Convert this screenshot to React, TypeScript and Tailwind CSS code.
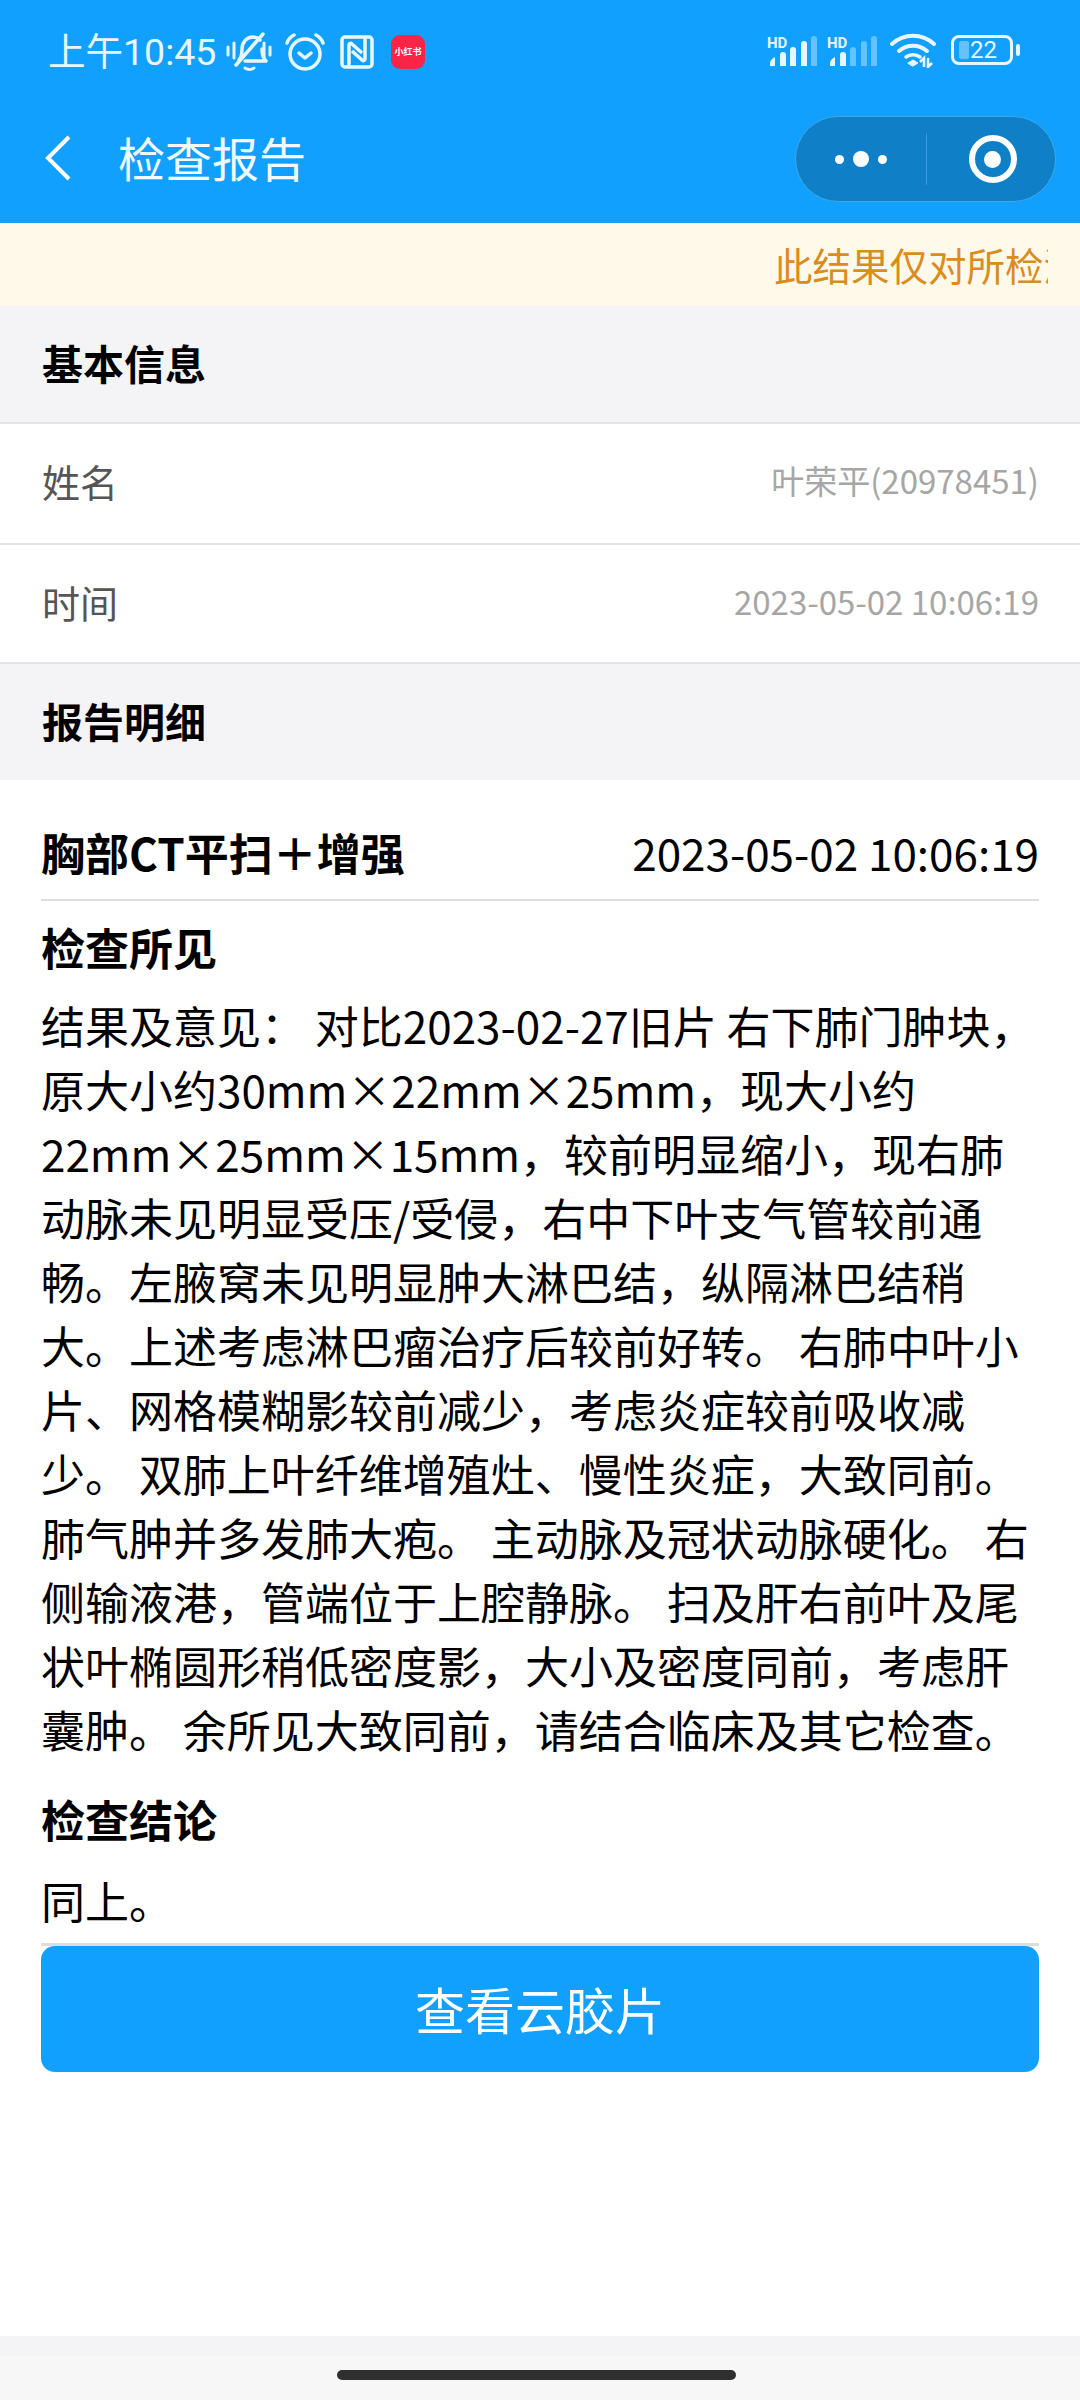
const reportLines = [
  '结果及意见： 对比2023-02-27旧片 右下肺门肿块，',
  '原大小约30mm×22mm×25mm，现大小约',
  '22mm×25mm×15mm，较前明显缩小，现右肺',
  '动脉未见明显受压/受侵，右中下叶支气管较前通',
  '畅。左腋窝未见明显肿大淋巴结，纵隔淋巴结稍',
  '大。上述考虑淋巴瘤治疗后较前好转。 右肺中叶小',
  '片、网格模糊影较前减少，考虑炎症较前吸收减',
  '少。 双肺上叶纤维增殖灶、慢性炎症，大致同前。',
  '肺气肿并多发肺大疱。 主动脉及冠状动脉硬化。 右',
  '侧输液港，管端位于上腔静脉。 扫及肝右前叶及尾',
  '状叶椭圆形稍低密度影，大小及密度同前，考虑肝',
  '囊肿。 余所见大致同前，请结合临床及其它检查。',
];

function MuteBell() {
  return (
    <svg width="46" height="40" viewBox="0 0 46 40" fill="none" stroke="#e8f7ff" strokeWidth="3.5" strokeLinecap="round" strokeLinejoin="round">
      <path d="M2 15v8M8 11v15M38 11v15M44 15v8" strokeWidth="3" />
      <path d="M13 28c3-3 3-7 3-11 0-7 5-12 11-12 3 0 5 1 7 3" />
      <path d="M36 17c0 5 1 9 4 12H19" />
      <path d="M10 33L37 2" />
      <path d="M19 36c3 2 6 2 9 0" strokeWidth="3" />
    </svg>
  );
}

function AlarmIcon() {
  return (
    <svg width="40" height="38" viewBox="0 0 40 38" fill="none" stroke="#e8f7ff" strokeWidth="3.5" strokeLinecap="round" strokeLinejoin="round">
      <circle cx="20" cy="21" r="15" />
      <path d="M14 20l6 5 6-5" />
      <path d="M2 10c1-3 3-6 7-8M38 10c-1-3-3-6-7-8" />
    </svg>
  );
}

function NfcIcon() {
  return (
    <svg width="34" height="34" viewBox="0 0 34 34" fill="none" stroke="#e8f7ff" strokeWidth="3.5" strokeLinejoin="round">
      <rect x="2" y="2" width="30" height="30" rx="3" />
      <path d="M9 31V10c0-2 2-2 3-1l10 9" />
      <path d="M25 3v21c0 2-2 2-3 1l-10-9" />
    </svg>
  );
}

function SignalIcon({ fullBars }: { fullBars: number }) {
  const bars = ['M3 31v-3q0-3 5-6v9z', 'M13 31V20q0-3 3-3t3 3v11z', 'M23 31V15q0-3 3-3t3 3v16z', 'M34 31V9q0-3 3-3t3 3v22z', 'M44 31V4q0-3 3-3t3 3v27z'];
  return (
    <svg width="50" height="31" viewBox="0 0 50 31">
      <text x="0" y="13" fill="#e8f7ff" fontSize="15" fontWeight="700" fontFamily="Roboto, sans-serif">HD</text>
      {bars.map((d, i) => (
        <path key={i} d={d} fill={i < fullBars ? '#e8f7ff' : '#66c2ff'} />
      ))}
    </svg>
  );
}

function WifiIcon() {
  return (
    <svg width="46" height="36" viewBox="0 0 46 36" fill="none" stroke="#e8f7ff" strokeWidth="4" strokeLinecap="round">
      <path d="M2 12c12-11 30-11 42 0" />
      <path d="M9 19c8-7 20-7 28 0" />
      <path d="M16 25c4-3 10-3 14 0" strokeWidth="3.5" />
      <path d="M18 31l5-3 5 3-5 3z" fill="#e8f7ff" strokeWidth="1" />
      <path d="M34 35v-9l-4 4M38 26v9l4-4" strokeWidth="2.5" strokeLinecap="butt" />
    </svg>
  );
}

function BatteryIcon() {
  return (
    <div className="flex items-center gap-[3px]">
      <div className="relative flex h-[30px] w-[62px] items-center rounded-[8px] border-[3px] border-[#e8f7ff] pl-[5px]">
        <div className="h-[18px] w-[10px] rounded-[2px] bg-[#66c2ff]" />
        <span className="ml-[1px] font-['Roboto',sans-serif] text-[24px] leading-none text-[#e8f7ff]">22</span>
      </div>
      <div className="h-[12px] w-[4px] rounded-[2px] bg-[#e8f7ff]" />
    </div>
  );
}

function StatusBar() {
  return (
    <div className="flex h-[100px] items-start justify-between pl-[48px] pr-[60px] pt-[32px]">
      <div className="flex items-center">
        <span className="w-[171px] font-['Roboto','Noto_Sans_CJK_SC',sans-serif] text-[37.5px] leading-[38px] whitespace-nowrap text-[#e8f7ff]">上午10:45</span>
        <div className="ml-[7px]"><MuteBell /></div>
        <div className="ml-[13px]"><AlarmIcon /></div>
        <div className="ml-[15px]"><NfcIcon /></div>
        <div className="ml-[17px] flex h-[34px] w-[34px] items-center justify-center overflow-hidden rounded-[9px] bg-[#fb2447] font-['Noto_Sans_CJK_SC',sans-serif] text-[9px] font-bold whitespace-nowrap text-white">小红书</div>
      </div>
      <div className="flex items-center">
        <SignalIcon fullBars={4} />
        <div className="ml-[10px]"><SignalIcon fullBars={2} /></div>
        <div className="ml-[13px]"><WifiIcon /></div>
        <div className="ml-[15px]"><BatteryIcon /></div>
      </div>
    </div>
  );
}

function NavBar() {
  return (
    <div className="flex h-[123px] items-start justify-between pl-[45px] pr-[24px]">
      <div className="flex h-[116px] items-center">
        <svg width="26" height="46" viewBox="0 0 26 46" fill="none" stroke="white" strokeWidth="4">
          <path d="M24 2L3 23l21 21" />
        </svg>
        <span className="ml-[47px] pb-[4px] text-[47px] leading-none text-[#f2fbff]">检查报告</span>
      </div>
      <div className="mt-[16px] flex h-[86px] w-[261px] items-center rounded-full border border-[#3fa6e8] bg-[#0f7fc8]">
        <div className="flex w-[130px] items-center justify-center gap-[9px]">
          <div className="h-[9px] w-[9px] rounded-full bg-white" />
          <div className="h-[16px] w-[16px] rounded-full bg-white" />
          <div className="h-[9px] w-[9px] rounded-full bg-white" />
        </div>
        <div className="h-[52px] w-px bg-[#3a9ad8]" />
        <div className="flex flex-1 items-center justify-center pl-[3px]">
          <div className="flex h-[48px] w-[48px] items-center justify-center rounded-full border-[6px] border-white">
            <div className="h-[17px] w-[17px] rounded-full bg-white" />
          </div>
        </div>
      </div>
    </div>
  );
}

function InfoRow({ label, value, height }: { label: string; value: string; height: string }) {
  return (
    <div className={`flex items-center justify-between border-t-2 border-[#e3e3e3] pl-[42px] pr-[41px] ${height}`}>
      <span className="text-[38px] text-[#555555]">{label}</span>
      <span className="text-[33px] text-[#a6a6a6]">{value}</span>
    </div>
  );
}

export default function App() {
  return (
    <div className="flex h-[2400px] w-[1080px] flex-col overflow-hidden bg-white font-['Noto_Sans_CJK_SC',sans-serif]">
      <header className="bg-[#12a0ff]">
        <StatusBar />
        <NavBar />
      </header>

      <div className="flex h-[83px] items-center bg-[#fff9e9] pl-[774px] pr-[32px]">
        <div className="overflow-hidden text-[38.5px] whitespace-nowrap text-[#d98c1f]">此结果仅对所检测标本负责</div>
      </div>

      <div className="flex h-[116px] items-center bg-[#f4f3f6] px-[42px] pb-[3px] text-[41px] font-bold text-black">基本信息</div>
      <InfoRow label="姓名" value="叶荣平(20978451)" height="h-[121px] pb-[6px]" />
      <InfoRow label="时间" value="2023-05-02 10:06:19" height="h-[119px] pb-[4px]" />
      <div className="flex h-[118px] items-center border-t-2 border-[#e3e3e3] bg-[#f4f3f6] px-[42px] pb-[3px] text-[41px] font-bold text-black">报告明细</div>

      <main className="flex flex-1 flex-col px-[41px]">
        <div className="flex h-[121px] items-center justify-between border-b-2 border-[#dddddd] pt-[24px] text-[44px] text-black">
          <span className="font-bold">胸部CT平扫＋增强</span>
          <span>2023-05-02 10:06:19</span>
        </div>
        <h3 className="mt-[14px] text-[44px] leading-[64px] font-bold text-black">检查所见</h3>
        <div className="mt-[14px] text-[44px] leading-[64px] text-black">
          {reportLines.map((line) => (
            <div key={line} className="whitespace-pre">{line}</div>
          ))}
        </div>
        <h3 className="mt-[26px] text-[44px] leading-[64px] font-bold text-black">检查结论</h3>
        <div className="mt-[17px] border-b-[3px] border-[#dddddd] pb-[11px] text-[44px] leading-[64px] text-black">同上。</div>
        <button className="flex h-[126px] items-center justify-center rounded-[14px] bg-[#12a0ff] pb-[2px] text-[50px] text-white">查看云胶片</button>
      </main>

      <footer className="h-[64px] bg-[#f7f7f7]">
        <div className="h-[20px] bg-[#f4f4f6]" />
        <div className="ml-[337px] mt-[14px] h-[10px] w-[399px] rounded-full bg-[#2f2f2f]" />
      </footer>
    </div>
  );
}
